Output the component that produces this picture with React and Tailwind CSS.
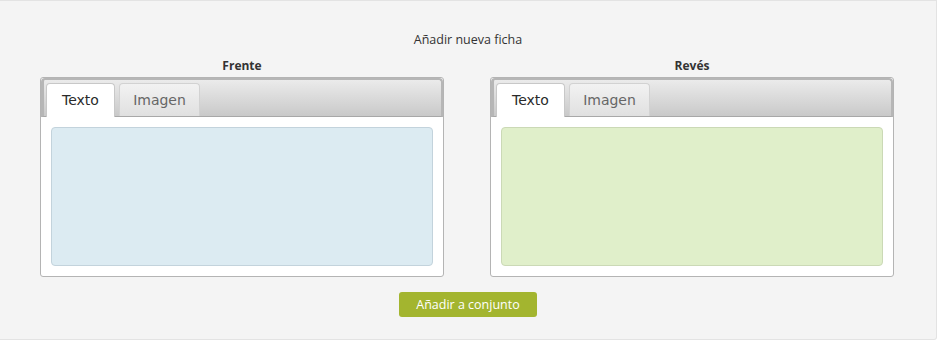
export default function App() {
  const sides = [
    { title: "Frente", fill: "bg-[#dcebf2] border-[#c3d3dc]" },
    { title: "Revés", fill: "bg-[#e0efca] border-[#cbd9b6]" },
  ];

  return (
    <div className="w-[938px] h-[345px] bg-white" style={{ fontFamily: "'Open Sans', sans-serif" }}>
      <div className="w-[937px] h-[340px] bg-[#f4f4f4] border-t border-r border-b border-[#e3e3e3] rounded-br-[3px] flex flex-col items-center">
        <div className="mt-[31px] text-[12.5px] leading-[16px] text-[#333]">Añadir nueva ficha</div>

        <div className="mt-[9px] self-start ml-[40px] flex gap-[46px]">
          {sides.map((side) => (
            <div key={side.title} className="w-[404px] flex flex-col">
              <div className="text-center text-[12px] leading-[17px] font-bold text-[#333]">{side.title}</div>
              <div className="mt-[3px] h-[200px] bg-white border border-[#b4b4b4] rounded-[3px] flex flex-col">
                {/* tab strip */}
                <div className="h-[39px] border-l-[3px] border-t-[2px] border-r-[2px] border-[#b6b6b6] rounded-t-[4px] border-b border-b-[#a8a8a8] bg-gradient-to-b from-[#ebebeb] to-[#c9c9c9] flex items-end gap-[4px] pl-[2px]">
                  <div className="w-[69px] h-[34px] -mb-px bg-white border border-b-0 border-[#c8c8c8] rounded-t-[4px] flex items-center justify-center text-[14px] text-[#2a2a2a]" style={{ fontFamily: "'DejaVu Sans', sans-serif" }}>
                    Texto
                  </div>
                  <div className="w-[81px] h-[33px] bg-gradient-to-b from-[#f2f2f2] to-[#e0e0e0] border border-b-0 border-[#d2d2d2] rounded-t-[4px] flex items-center justify-center text-[14px] text-[#666]" style={{ fontFamily: "'DejaVu Sans', sans-serif" }}>
                    Imagen
                  </div>
                </div>
                <div className="flex-1 p-[10px]">
                  <div className={`h-full border rounded-[4px] ${side.fill}`} />
                </div>
              </div>
            </div>
          ))}
        </div>

        <button className="mt-[15px] w-[138px] h-[25px] bg-[#a3b52f] rounded-[3px] text-white text-[12.5px] leading-[25px]">
          Añadir a conjunto
        </button>
      </div>
    </div>
  );
}
